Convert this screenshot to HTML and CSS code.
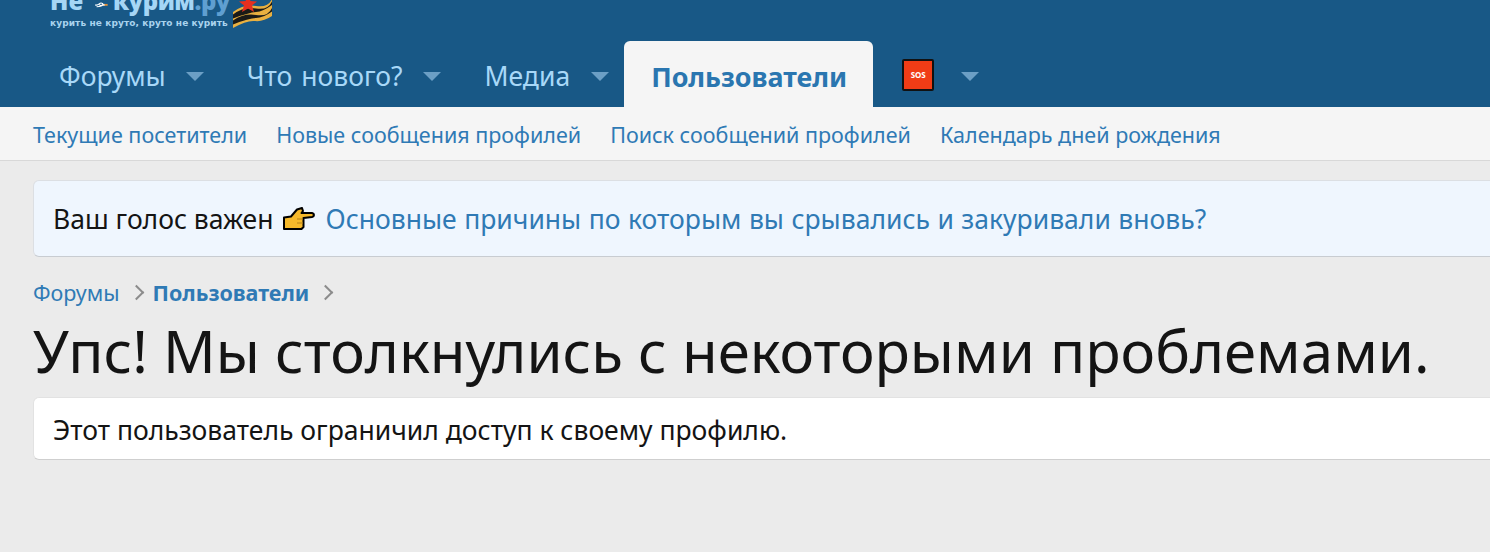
FILE: index.html
```html
<!DOCTYPE html>
<html>
<head>
<meta charset="utf-8">
<title>Упс! Мы столкнулись с некоторыми проблемами.</title>
<link rel="stylesheet" href="styles.css">
</head>
<body>
	<header class="header">
		<div class="logo">
			<div class="logo-text">
				<div class="logo-name"><span>Не</span>
					<svg class="logo-knot" width="24" height="10" viewBox="0 0 24 10"><path d="M0 5q5 1 8-2 3-3 6-1 2 2-1 4-4 1-4-2" fill="none" stroke="#fff" stroke-width="2.200"/><path d="M3 8.500q5 0 11-2.500" fill="none" stroke="#fff" stroke-width="2"/><rect x="13" y="3" width="6" height="3.500" fill="#f0f0f0"/><rect x="18" y="3" width="6" height="3.500" fill="#e0913c"/></svg>
					<span class="logo-word">курим<span class="logo-tld">.ру</span></span></div>
				<div class="logo-slogan">курить не круто, круто не курить</div>
			</div>
			<svg class="logo-ribbon" width="42" height="30" viewBox="0 0 42 30">
				<path d="M1 12Q12 4 24 6T40 -1V16Q31 22 23 21T1 28Z" fill="#e9b040"/>
				<path d="M1 14.500Q12 6.500 24 8.500T40 1.500V5Q31 11.500 24 12T1 18.500ZM1 20.500Q12 13 24 15T40 8V11.500Q31 18 24 18T1 24.500Z" fill="#1b1a17"/>
				<path d="M16 -5L18.500 1 25 1.500 20 5.500 22 12 16 8.500 10 12 12 5.500 7 1.500 13.500 1Z" fill="#e5301f"/>
			</svg>
		</div>
		<nav class="nav">
			<a class="nav-item" href="#">Форумы<span class="caret"></span></a>
			<a class="nav-item" href="#">Что нового?<span class="caret"></span></a>
			<a class="nav-item" href="#">Медиа<span class="caret"></span></a>
			<a class="nav-item nav-active" href="#">Пользователи</a>
			<a class="nav-item nav-sos" href="#"><span class="sos">SOS</span><span class="caret"></span></a>
		</nav>
	</header>
	<div class="subnav">
		<a href="#">Текущие посетители</a>
		<a href="#">Новые сообщения профилей</a>
		<a href="#">Поиск сообщений профилей</a>
		<a href="#">Календарь дней рождения</a>
	</div>
	<div class="content">
		<div class="notice">Ваш голос важен
			<svg class="hand" width="32" height="23" viewBox="0 0 32 23"><path d="M1 10.500L8 9.500 14 2.500 19 1 20 4 18.500 6H29Q31 6.500 31 8T29 10L20.500 11V20L18.500 22H1Z" fill="#f6b92b" stroke="#000" stroke-width="2" stroke-linejoin="round"/><path d="M14 12H20M14 16H20" stroke="#b5821a" stroke-width="1" fill="none"/></svg>
			<a class="notice-link" href="#">Основные причины по которым вы срывались и закуривали вновь?</a></div>
		<div class="crumbs">
			<a href="#">Форумы</a><span class="chevron"></span>
			<a class="crumb-current" href="#">Пользователи</a><span class="chevron"></span>
		</div>
		<h1>Упс! Мы столкнулись с некоторыми проблемами.</h1>
		<div class="message">Этот пользователь ограничил доступ к своему профилю.</div>
	</div>
</body>
</html>
```

FILE: styles.css
```css
html, body {
	margin: 0;
	height: 552px;
	overflow: hidden;
}

body {
	font-family: "Noto Sans", "Open Sans", sans-serif;
	background: #ebebeb;
	color: #141414;
}

a {
	text-decoration: none;
	color: #2f7ab5;
}

.header {
	height: 107px;
	background: #185886;
	overflow: hidden;
}

.logo {
	height: 41px;
	padding-left: 50px;
	display: flex;
	align-items: flex-end;
	gap: 2px;
}

.logo-text {
	width: 180px;
	padding-bottom: 12px;
}

.logo-name {
	display: flex;
	align-items: center;
	height: 20px;
	font: 800 24px/20px "Open Sans", sans-serif;
	color: #a5d6f5;
	white-space: nowrap;
}

.logo-word {
	letter-spacing: -0.5px;
}

.logo-tld {
	color: #5f9fd1;
}

.logo-knot {
	margin: 7px 5px 0 12px;
}

.logo-slogan {
	margin-top: 7px;
	font: bold 9px/11px "DejaVu Sans", sans-serif;
	letter-spacing: 0.1px;
	color: #a9d3ee;
	white-space: nowrap;
}

.logo-ribbon {
	margin-bottom: 11px;
}

.nav {
	height: 66px;
	padding-left: 33px;
	display: flex;
	align-items: stretch;
}

.nav-item {
	display: flex;
	align-items: center;
	padding: 4px 0 0 26px;
	font-size: 26.500px;
	word-spacing: 2px;
	color: #a8d8f8;
}

.caret {
	margin: 0 17px 0 21px;
	border-left: 9px solid transparent;
	border-right: 9px solid transparent;
	border-top: 9px solid #6c9fc5;
}

.nav-item:first-child .caret {
	margin-left: 20px;
}

.nav-active {
	padding: 4px 26px 0 27px;
	margin-left: -2px;
	background: #f5f5f5;
	border-radius: 6px 6px 0 0;
	color: #2a76b0;
	font-size: 26.900px;
	font-weight: bold;
}

.nav-sos {
	padding-left: 29px;
}

.sos {
	width: 28px;
	height: 28px;
	margin-top: -2px;
	border: 2px solid #111;
	border-radius: 2px;
	background: #f03c16;
	color: #fff;
	font-size: 8px;
	font-weight: bold;
	line-height: 28px;
	text-align: center;
}

.nav-sos .caret {
	margin-left: 27px;
}

.subnav {
	height: 54px;
	padding: 2px 0 0 33px;
	background: #f5f5f5;
	border-bottom: 1px solid #d8d8d8;
	box-sizing: border-box;
	display: flex;
	align-items: center;
	gap: 29px;
	font-size: 21.500px;
}

.content {
	padding: 19px 0 0 33px;
	margin-right: -40px;
}

.notice {
	height: 77px;
	box-sizing: border-box;
	padding-left: 19px;
	background: #eff6fe;
	border: 1px solid #dcdfe3;
	border-bottom-color: #c8ccd1;
	border-radius: 6px;
	display: flex;
	align-items: center;
	gap: 10px;
	font-size: 26.500px;
	white-space: nowrap;
}

.notice-link {
	word-spacing: 0.6px;
}

.crumbs {
	height: 24px;
	margin-top: 23px;
	display: flex;
	align-items: center;
	font-size: 21.500px;
}

.crumb-current {
	font-weight: bold;
}

.chevron {
	width: 9px;
	height: 9px;
	margin: 0 11px 0 11px;
	border-top: 2px solid #8c8c8c;
	border-right: 2px solid #8c8c8c;
	transform: rotate(45deg);
}

h1 {
	margin: 9px 0 0;
	font-size: 58.200px;
	line-height: 76px;
	font-weight: normal;
	white-space: nowrap;
}

.message {
	height: 63px;
	margin-top: 8px;
	padding: 2px 0 0 19px;
	box-sizing: border-box;
	background: #fff;
	border: 1px solid #e2e2e2;
	border-bottom-color: #cfcfcf;
	border-radius: 6px;
	display: flex;
	align-items: center;
	font-size: 26.500px;
}
```
